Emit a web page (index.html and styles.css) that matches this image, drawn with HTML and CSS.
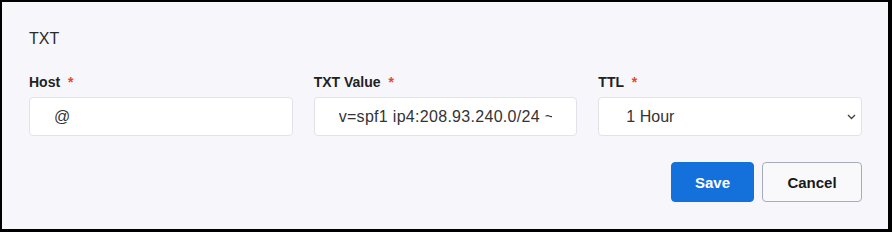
FILE: index.html
```html
<!DOCTYPE html>
<html lang="en">
<head>
    <meta charset="UTF-8">
    <meta name="viewport" content="width=device-width, initial-scale=1.0">
    <title>Edit TXT record</title>
    <link rel="stylesheet" href="styles.css">
</head>
<body>
    <div class="record-editor">
        <div class="record-type">TXT</div>
        <div class="fields">
            <div class="field">
                <label for="host">Host <span class="required">*</span></label>
                <input type="text" id="host" class="text-input" value="@">
            </div>
            <div class="field">
                <label for="txtValue">TXT Value <span class="required">*</span></label>
                <input type="text" id="txtValue" class="text-input txt-value" value="v=spf1 ip4:208.93.240.0/24 ~all">
            </div>
            <div class="field">
                <label for="ttl">TTL <span class="required">*</span></label>
                <div class="select-wrap">
                    <select id="ttl" class="text-input">
                        <option>30 Minutes</option>
                        <option selected>1 Hour</option>
                        <option>4 Hours</option>
                        <option>1 Day</option>
                    </select>
                    <svg class="chevron" width="9" height="6" viewBox="0 0 9 6">
                        <path d="M1 1 L4.5 4.5 L8 1" fill="none" stroke="#444" stroke-width="1.4"/>
                    </svg>
                </div>
            </div>
        </div>
        <div class="actions">
            <button class="btn btn-save">Save</button>
            <button class="btn btn-cancel">Cancel</button>
        </div>
    </div>
</body>
</html>
```

FILE: styles.css
```css
body {
    margin: 0;
    padding: 0;
    font-family: "Liberation Sans", Arial, sans-serif;
    background-color: #000;
}
.record-editor {
    box-sizing: border-box;
    width: 892px;
    height: 232px;
    border-style: solid;
    border-color: #000;
    border-width: 2px 4px 3px 2px;
    background-color: #f7f7fb;
    padding: 27px 26px 0 27px;
}
.record-type {
    font-size: 16px;
    line-height: 20px;
    color: #2a2a2a;
}
.fields {
    display: grid;
    grid-template-columns: 1fr 1fr 1fr;
    column-gap: 21px;
    margin-top: 25px;
}
.field label {
    display: block;
    font-size: 14px;
    font-weight: bold;
    line-height: 16px;
    color: #222;
    margin-bottom: 7px;
}
.required {
    color: #ee4422;
    margin-left: 4px;
}
.text-input {
    box-sizing: border-box;
    width: 100%;
    height: 39px;
    margin: 0;
    padding: 0 24px;
    border: 1px solid #e2e2ea;
    border-radius: 4px;
    background-color: #fff;
    font-family: "Liberation Sans", Arial, sans-serif;
    font-size: 16px;
    color: #333;
    outline: none;
}
.txt-value {
    letter-spacing: 0.3px;
}
.select-wrap {
    position: relative;
}
select.text-input {
    -webkit-appearance: none;
    appearance: none;
    padding-left: 27px;
}
.chevron {
    position: absolute;
    right: 6px;
    top: 17px;
}
.actions {
    display: flex;
    justify-content: flex-end;
    gap: 8px;
    margin-top: 26px;
}
.btn {
    height: 40px;
    border-radius: 4px;
    font-family: "Liberation Sans", Arial, sans-serif;
    font-size: 15px;
    font-weight: bold;
    cursor: pointer;
}
.btn-save {
    width: 83px;
    border: 1px solid #1471dc;
    background-color: #1471dc;
    color: #fff;
}
.btn-cancel {
    width: 100px;
    border: 1px solid #a3adbb;
    background-color: #f9f9fc;
    color: #1a1a1a;
}
```
